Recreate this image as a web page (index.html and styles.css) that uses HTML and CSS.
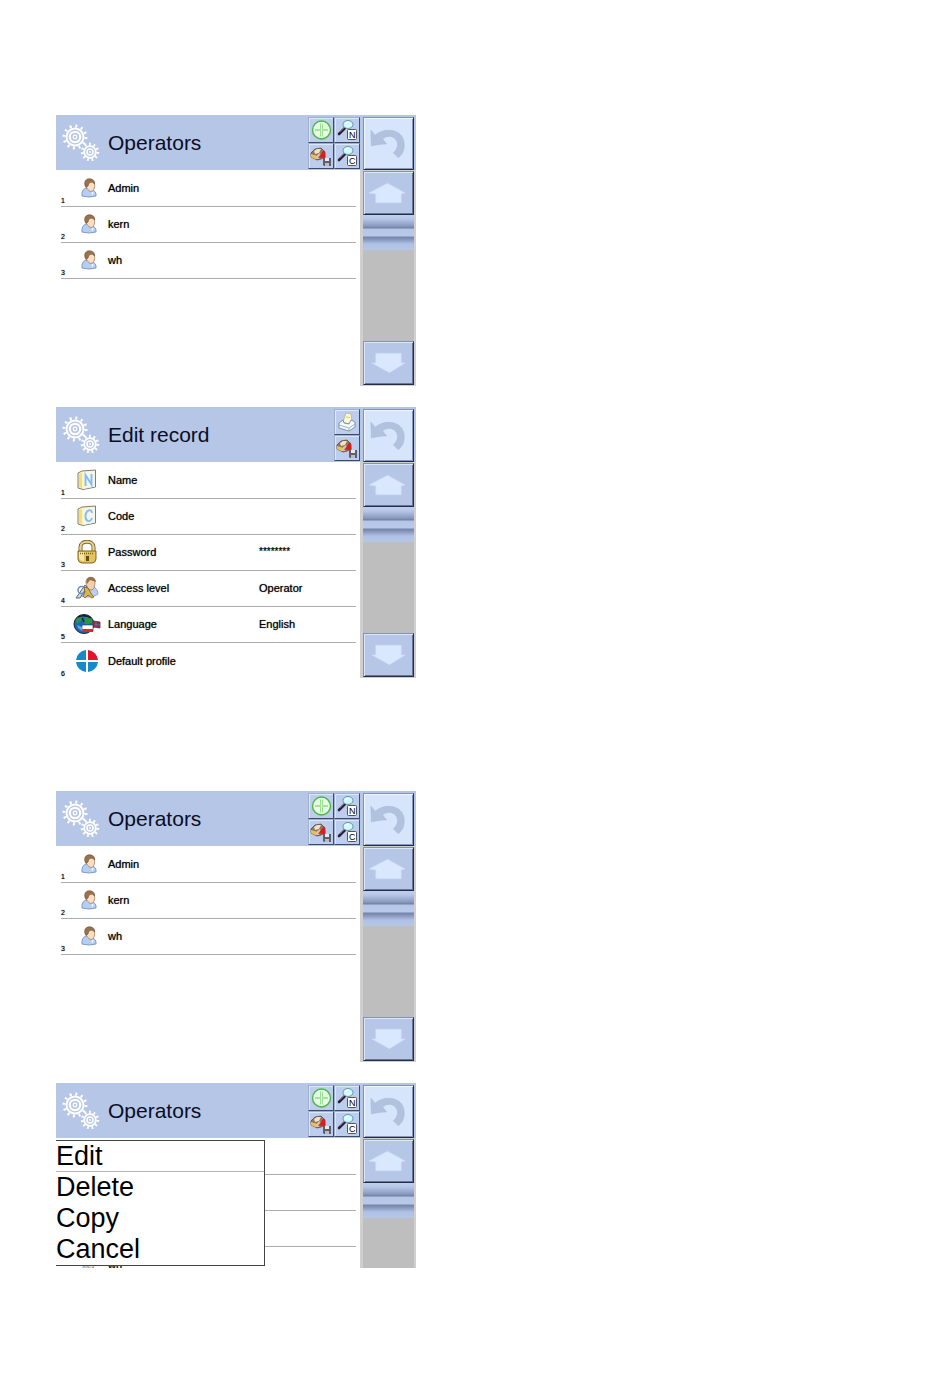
FILE: index.html
```
<!DOCTYPE html>
<html lang="en">
<head>
<meta charset="utf-8">
<title>Operators</title>
<link rel="stylesheet" href="styles.css">
</head>
<body>
<svg class="sprite" aria-hidden="true">
  <symbol id="gears" viewBox="0 0 38 40">
    <g fill="none" stroke="#fff">
      <circle cx="13" cy="14" r="11" stroke-width="3" stroke-dasharray="2 3.76"/>
      <circle cx="13" cy="14" r="8.5" stroke-width="2"/>
      <circle cx="13" cy="14" r="5.2" stroke-width="2.200"/>
      <circle cx="13" cy="14" r="1.8" stroke-width="1.300"/>
      <circle cx="28" cy="29" r="7.800" stroke-width="2.800" stroke-dasharray="1.800 2.650"/>
      <circle cx="28" cy="29" r="5.800" stroke-width="1.800"/>
      <circle cx="28" cy="29" r="3" stroke-width="1.600"/>
    </g>
    <circle cx="28" cy="29" r="1" fill="#fff"/>
  </symbol>
  <symbol id="user" viewBox="0 0 16 20">
    <path d="M1 18C.4 14 2 11 5 10l6 2c3 .5 4.500 3 4 6Q8 20 1 18z" fill="#b3cff7" stroke="#7c93bb" stroke-width=".9"/>
    <path d="M10.500 14l.5 4 2-3.500z" fill="#eef6ff"/>
    <path d="M4.500 5c0-4 8.500-4 9 1 .5 4-1 7.500-3.500 7.500C7 13 4.500 9 4.500 5z" fill="#fae0c2" stroke="#a87b56" stroke-width=".8"/>
    <path d="M5 9.500C2.500 6 3.500 1 8 .8c4 0 6 2 5.500 5.200C12.500 4 10.500 4 9 4.500 7.500 5 7.500 6.500 7 8z" fill="#99714d" stroke="#6e5138" stroke-width=".6"/>
  </symbol>
  <symbol id="plus" viewBox="0 0 24 24">
    <circle cx="12.500" cy="12" r="9" fill="#eafde6" stroke="#45ba3d" stroke-width="1.400"/>
    <path d="M12.500 5.500v13M6 12h13" stroke="#62cf58" stroke-width="2.200"/>
    <path d="M12.500 5v14M5.500 12h14" stroke="#f2fff0" stroke-width=".9"/>
  </symbol>
  <symbol id="find" viewBox="0 0 24 24">
    <path d="M4 16l6-6" stroke="#2b2033" stroke-width="2.600" stroke-linecap="round"/>
    <path d="M5 14l5-5" stroke="#8c6888" stroke-width=".8"/>
    <ellipse cx="13" cy="6.500" rx="5" ry="4" fill="#d0faff" stroke="#6596a8"/>
    <path d="M10.500 6q1-2 3-2" fill="none" stroke="#fff" stroke-width="1.200"/>
    <rect x="12.500" y="11.500" width="9" height="10" rx="1" fill="#fff" stroke="#555"/>
  </symbol>
  <symbol id="save" viewBox="0 0 24 24">
    <path d="M2 9l4-4 6-1 4 4v5l-4 2-4 1-6-3z" fill="#8f765f" stroke="#5a4b45" stroke-width=".8"/>
    <path d="M5 7l3-2 4 0-2 4-4 1z" fill="#eee1c5"/>
    <path d="M2 10l5 1.500v4L2 13z" fill="#efc04d"/>
    <path d="M7 12l4-3 1 3-2 3H7z" fill="#d9c5a2"/>
    <path d="M9 14l6-8 1 3 .5 6-4-1.500z" fill="#d61f20"/>
    <path d="M14 14h8v8h-7l-1-1z" fill="#606168"/>
    <path d="M16 14h4v3h-4z" fill="#e6e9ed"/>
    <path d="M16 19h4v3h-4z" fill="#b8bcc6"/>
  </symbol>
  <symbol id="print" viewBox="0 0 24 24">
    <path d="M8 12l3-9 5 1 1 8-4 2z" fill="#fdf9d7" stroke="#a5a48d" stroke-width=".6"/>
    <path d="M11 7l4 .6" stroke="#e0c94b"/>
    <path d="M4 13l4-3 1 3 5 1 2-4 4 2v5l-6 4-10-3z" fill="#f5faff" stroke="#67809b" stroke-width=".8"/>
    <path d="M4 15l10 3 6-4M14 18v3" fill="none" stroke="#8aa2bc" stroke-width=".8"/>
  </symbol>
  <symbol id="back" viewBox="0 0 50 50">
    <path d="M7 11l4.500 5C22 7 42 10 41 27c-.2 5-2 9-6 12l-5-5c5-4 6-11 1-15-4-3-9-2-12 1l4 5c-5 0-10 .5-15.500 2z" fill="#b1c1de" stroke="#a8b8d7" stroke-width=".6"/>
  </symbol>
  <symbol id="up" viewBox="0 0 50 42">
    <path d="M5 21L24 11l18 10-4 1v9H12v-9z" fill="#d9e8ff" stroke="#cadbf7" stroke-width=".6"/>
  </symbol>
  <symbol id="down" viewBox="0 0 50 42">
    <path d="M12 11h26v10h4L26 31 8 21h4z" fill="#d9e8ff" stroke="#cadbf7" stroke-width=".6"/>
  </symbol>
  <symbol id="card" viewBox="0 0 20 22">
    <path d="M1 4L5 2 18.500 1V18L6 20.500 1 19z" fill="#fff3b4" stroke="#827d74"/>
    <path d="M5.500 3.500L18 2v15.500L6 20z" fill="#f2f6ec"/>
    <path d="M2 5l3-1v15l-3-1z" fill="#f5dc80"/>
  </symbol>
  <symbol id="letter-n" viewBox="0 0 20 22"><path d="M8.500 17V6L14.500 15.500V5" fill="none" stroke="#86bdf0" stroke-width="1.900"/></symbol>
  <symbol id="letter-c" viewBox="0 0 20 22"><path d="M15 8C14.500 3 9 5 8.500 10.500S13 18.500 15 13" fill="none" stroke="#86bdf0" stroke-width="1.900"/></symbol>
  <symbol id="lock" viewBox="0 0 20 24">
    <path d="M3.500 12V7c0-7 13-7 13 0v5" fill="none" stroke="#7d6938" stroke-width="4"/>
    <path d="M3.500 12V7c0-7 13-7 13 0v5" fill="none" stroke="#ead596" stroke-width="2.200"/>
    <path d="M1 11h18v8q-.5 4-4 4H5q-3.500 0-4-4z" fill="#e8c456" stroke="#6e5820" stroke-width=".9"/>
    <path d="M2 12h5v9q-4 0-5-3z" fill="#f8e79e"/>
    <path d="M3 13.500h14" stroke="#77652f" stroke-width="1.500" stroke-dasharray="1 1"/>
    <path d="M9 16h3v5H9z" fill="#5f4c20"/>
  </symbol>
  <symbol id="access" viewBox="0 0 24 24">
    <path d="M6 20c0-5 3-9 9-10 5 0 8 4 8 8-4 3-11 4-17 2z" fill="#b8d2f3" stroke="#7187a8" stroke-width=".7"/>
    <path d="M11 5c1-5 9-5 9 0s-1 9-4 9-5-4-5-9z" fill="#f3cfac" stroke="#8e6b50" stroke-width=".7"/>
    <path d="M12 8C9 0 20-2 21 6l-6-2z" fill="#947047"/>
    <path d="M1 22l9-13 2 2-7 11z" fill="#c5d9ef" stroke="#4b5f77" stroke-width=".9"/>
    <circle cx="6.500" cy="14" r="3.500" fill="none" stroke="#718eae" stroke-width="1.500"/>
    <path d="M9 11l4 1 4 7 2 2-2 1-4-3-3 3-2-2 2-4z" fill="#dcb34e" stroke="#665322" stroke-width=".7"/>
  </symbol>
  <symbol id="language" viewBox="0 0 28 22">
    <ellipse cx="11" cy="11" rx="10" ry="9.500" fill="#1969b4" stroke="#17223e"/>
    <path d="M3 7q3-5 8-5l-1 4-4 3-2 2zM12 4l6 0 2 6-3 0-2 2-4-2z" fill="#2c9448"/>
    <path d="M5 4q7-3 13 1M9 5l2 4" fill="none" stroke="#101e32" stroke-width="1.500"/>
    <path d="M20 8l7 1v6l-7-1z" fill="#a92535" stroke="#49304a" stroke-width=".8"/>
    <path d="M21 11l6 1M23 9v5" stroke="#526dad"/>
    <path d="M9 12h11v6H9z" fill="#fff" stroke="#334" stroke-width=".6"/>
    <path d="M9 16h11v3H10z" fill="#db2633"/>
    <path d="M4 12l5 2v4l-4-3z" fill="#54a8ed"/>
  </symbol>
  <symbol id="profile" viewBox="0 0 24 24">
    <path d="M11 1v10H1A11 11 0 0 1 11 1zM11 13v10A11 11 0 0 1 1 13zM13 13h10a11 11 0 0 1-10 10z" fill="#158acb"/>
    <path d="M13 1a11 11 0 0 1 10 10H13z" fill="#e5112e"/>
  </symbol>
</svg>

<main class="page">
  <div class="pair">
    <section class="screen">
      <div class="content">
        <header class="bar">
          <svg class="gears"><use href="#gears"/></svg>
          <h2 class="title">Operators</h2>
          <div class="tools">
            <button class="tool" aria-label="Add"><svg><use href="#plus"/></svg></button>
            <button class="tool" aria-label="Find by name"><svg><use href="#find"/></svg><span class="key">N</span></button>
            <button class="tool" aria-label="Save"><svg><use href="#save"/></svg></button>
            <button class="tool" aria-label="Find by code"><svg><use href="#find"/></svg><span class="key">C</span></button>
          </div>
        </header>
        <ul class="list">
          <li class="row"><span class="num">1</span><svg class="user"><use href="#user"/></svg><span>Admin</span></li>
          <li class="row"><span class="num">2</span><svg class="user"><use href="#user"/></svg><span>kern</span></li>
          <li class="row"><span class="num">3</span><svg class="user"><use href="#user"/></svg><span>wh</span></li>
        </ul>
      </div>
      <nav class="side">
        <button class="back" aria-label="Back"><svg><use href="#back"/></svg></button>
        <button class="arrow" aria-label="Up"><svg><use href="#up"/></svg></button>
        <div class="track"><div class="thumb"></div></div>
        <button class="arrow" aria-label="Down"><svg><use href="#down"/></svg></button>
      </nav>
    </section>

    <section class="screen">
      <div class="content">
        <header class="bar">
          <svg class="gears"><use href="#gears"/></svg>
          <h2 class="title">Edit record</h2>
          <div class="tools single">
            <button class="tool" aria-label="Print"><svg><use href="#print"/></svg></button>
            <button class="tool" aria-label="Save"><svg><use href="#save"/></svg></button>
          </div>
        </header>
        <ul class="list">
          <li class="row"><span class="num">1</span><svg class="icon"><use href="#card"/><use href="#letter-n"/></svg><span>Name</span></li>
          <li class="row"><span class="num">2</span><svg class="icon"><use href="#card"/><use href="#letter-c"/></svg><span>Code</span></li>
          <li class="row"><span class="num">3</span><svg class="icon tall"><use href="#lock"/></svg><span>Password</span><span class="stars">********</span></li>
          <li class="row"><span class="num">4</span><svg class="icon large"><use href="#access"/></svg><span>Access level</span><span>Operator</span></li>
          <li class="row"><span class="num">5</span><svg class="icon wide"><use href="#language"/></svg><span>Language</span><span>English</span></li>
          <li class="row last"><span class="num">6</span><svg class="icon large"><use href="#profile"/></svg><span>Default profile</span></li>
        </ul>
      </div>
      <nav class="side">
        <button class="back" aria-label="Back"><svg><use href="#back"/></svg></button>
        <button class="arrow" aria-label="Up"><svg><use href="#up"/></svg></button>
        <div class="track"><div class="thumb"></div></div>
        <button class="arrow" aria-label="Down"><svg><use href="#down"/></svg></button>
      </nav>
    </section>
  </div>

  <div class="pair">
    <section class="screen">
      <div class="content">
        <header class="bar">
          <svg class="gears"><use href="#gears"/></svg>
          <h2 class="title">Operators</h2>
          <div class="tools">
            <button class="tool" aria-label="Add"><svg><use href="#plus"/></svg></button>
            <button class="tool" aria-label="Find by name"><svg><use href="#find"/></svg><span class="key">N</span></button>
            <button class="tool" aria-label="Save"><svg><use href="#save"/></svg></button>
            <button class="tool" aria-label="Find by code"><svg><use href="#find"/></svg><span class="key">C</span></button>
          </div>
        </header>
        <ul class="list">
          <li class="row"><span class="num">1</span><svg class="user"><use href="#user"/></svg><span>Admin</span></li>
          <li class="row"><span class="num">2</span><svg class="user"><use href="#user"/></svg><span>kern</span></li>
          <li class="row"><span class="num">3</span><svg class="user"><use href="#user"/></svg><span>wh</span></li>
        </ul>
      </div>
      <nav class="side">
        <button class="back" aria-label="Back"><svg><use href="#back"/></svg></button>
        <button class="arrow" aria-label="Up"><svg><use href="#up"/></svg></button>
        <div class="track"><div class="thumb"></div></div>
        <button class="arrow" aria-label="Down"><svg><use href="#down"/></svg></button>
      </nav>
    </section>

    <section class="screen cropped">
      <div class="content">
        <header class="bar">
          <svg class="gears"><use href="#gears"/></svg>
          <h2 class="title">Operators</h2>
          <div class="tools">
            <button class="tool" aria-label="Add"><svg><use href="#plus"/></svg></button>
            <button class="tool" aria-label="Find by name"><svg><use href="#find"/></svg><span class="key">N</span></button>
            <button class="tool" aria-label="Save"><svg><use href="#save"/></svg></button>
            <button class="tool" aria-label="Find by code"><svg><use href="#find"/></svg><span class="key">C</span></button>
          </div>
        </header>
        <ul class="list">
          <li class="row"></li>
          <li class="row"></li>
          <li class="row"></li>
          <li class="row last"><span class="num"></span><svg class="user"><use href="#user"/></svg><span>wh</span></li>
        </ul>
        <div class="menu" role="menu">
          <button class="choice current" role="menuitem">Edit</button>
          <button class="choice" role="menuitem">Delete</button>
          <button class="choice" role="menuitem">Copy</button>
          <button class="choice" role="menuitem">Cancel</button>
        </div>
      </div>
      <nav class="side">
        <button class="back" aria-label="Back"><svg><use href="#back"/></svg></button>
        <button class="arrow" aria-label="Up"><svg><use href="#up"/></svg></button>
        <div class="track"><div class="thumb"></div></div>
      </nav>
    </section>
  </div>
</main>
</body>
</html>
```
FILE: styles.css
```
* { box-sizing: border-box; }
body {
  margin: 0;
  background: #fff;
  color: #000;
  font-family: "Liberation Sans", Arial, sans-serif;
}
svg { display: block; flex: none; }
button { padding: 0; font: inherit; color: inherit; border-radius: 0; }
.sprite { position: absolute; width: 0; height: 0; }
.page {
  display: flex;
  flex-direction: column;
  gap: 113px;
  padding: 115px 56px 129px;
}
.pair { display: flex; flex-direction: column; gap: 21px; }
.screen {
  display: grid;
  grid-template-columns: 1fr 56px;
  width: 43%;
  min-width: 320px;
  max-width: 361px;
  min-height: 271px;
}
.cropped { min-height: 0; height: 185px; overflow: hidden; }
.content { position: relative; min-width: 0; }
.bar {
  display: flex;
  align-items: center;
  height: 55px;
  padding-left: 6px;
  background: #b5c6e7;
}
.gears { width: 38px; height: 40px; margin-right: 8px; }
.title {
  flex: 1;
  margin: 0;
  font-size: 21px;
  line-height: 24px;
  font-weight: 400;
  color: #0a0e24;
}
.tools {
  display: grid;
  grid-template-columns: 26px 26px;
  grid-auto-rows: 26px;
}
.single { grid-template-columns: 26px; }
.tool {
  position: relative;
  background: #bccded;
  border: 1px solid;
  border-color: #9eafd0 #3f4a66 #3f4a66 #9eafd0;
  box-shadow: inset 1px 1px #dbe7fb;
}
.tool svg { width: 24px; height: 24px; }
.key {
  position: absolute;
  right: 2px;
  bottom: 2px;
  width: 10px;
  font-size: 9px;
  line-height: 10px;
  text-align: center;
}
.list { margin: 0; padding: 1px 4px 0 5px; list-style: none; }
.row {
  display: grid;
  grid-template-columns: 9px 34px 4px 151px 1fr;
  align-items: center;
  height: 36px;
  padding-bottom: 1px;
  border-bottom: 1px solid #adadad;
  font-size: 11px;
  line-height: 14px;
  text-shadow: 0 0 1px #555;
}
.row span:nth-of-type(2) { grid-column: 4; }
.row span:nth-of-type(3) { grid-column: 5; }
.last { height: 35px; padding-bottom: 0; border-bottom: 0; }
.num { align-self: end; font-size: 7px; line-height: 8px; }
.user { width: 16px; height: 20px; margin-left: 11px; }
.icon { width: 20px; height: 22px; justify-self: center; }
.tall { height: 24px; }
.large { width: 24px; height: 24px; }
.wide { width: 28px; height: 22px; }
.stars { font-size: 10px; }
.side {
  display: flex;
  flex-direction: column;
  padding: 2px 2px 1px 3px;
  background: linear-gradient(#b5c6e7 55px, #cfcfcf 55px);
}
.back, .arrow {
  flex: none;
  border: 1px solid;
  border-color: #8392b3 #252d43 #252d43 #8392b3;
}
.back {
  height: 53px;
  margin-bottom: 1px;
  background: #d7e5fc;
  box-shadow: inset 1px 1px #f0f6ff, inset -1px -1px #8997b5;
}
.back svg { width: 100%; height: 50px; }
.arrow {
  height: 44px;
  background: #b5c6e7;
  box-shadow: inset 1px 1px #d9e6fb, inset -1px -1px #68779a;
}
.arrow svg { width: 100%; height: 42px; }
.track { flex: 1; min-height: 54px; background: #bebebe; }
.thumb {
  height: 36px;
  background: linear-gradient(#c0cff0 0, #b5c6e7 4px, #899abd 11px, #6f80a5 13px, #b5c6e7 14px, #b9c9ea 21px, #7384aa 22px, #8293b8 24px, #afc1e5 29px, #b5c6e7 34px, #bebebe 36px);
}
.menu {
  position: absolute;
  top: 57px;
  left: 0;
  display: flex;
  flex-direction: column;
  width: 209px;
  background: #fff;
  border: 1px solid #444;
  border-bottom-width: 0;
  border-left-width: 0;
  box-shadow: 0 1px #444;
}
.choice {
  height: 31px;
  background: none;
  border: 0;
  border-bottom: 1px solid transparent;
  font-size: 27px;
  line-height: 30px;
  text-align: left;
}
.current { border-color: #b5b5b5; }
```
